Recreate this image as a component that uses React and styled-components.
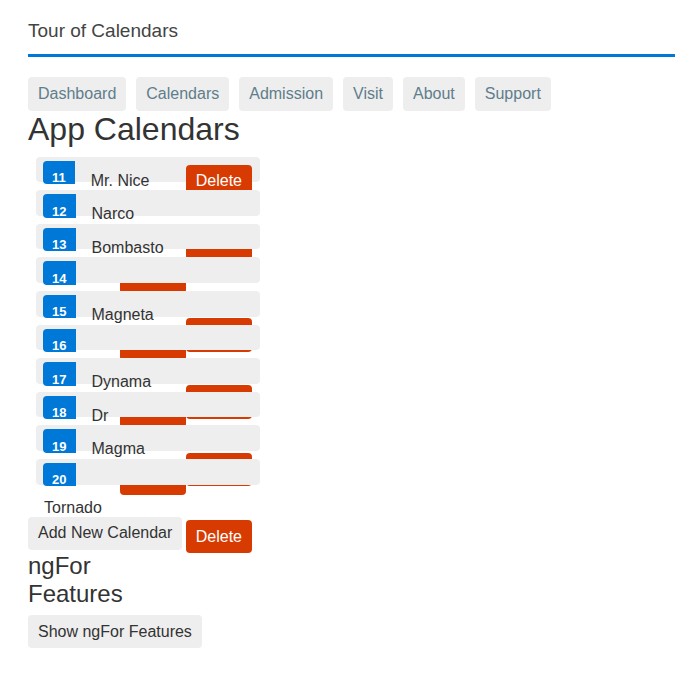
import React from 'react'
import styled, { createGlobalStyle } from 'styled-components'

const GlobalStyle = createGlobalStyle`
  body {
    margin: 0;
    background: #fff;
    color: #333;
    font-family: 'Liberation Sans', Arial, Helvetica, sans-serif;
  }
`

const Page = styled.div`
  padding-left: 28px;
`

const Header = styled.header`
  padding: 20px 0 11.5px;
  border-bottom: 3px solid #0078d7;
`

const Title = styled.h1`
  margin: 0;
  font-size: 19px;
  line-height: 22px;
  font-weight: normal;
  color: #444;
`

const Nav = styled.nav`
  display: flex;
  gap: 10px;
  margin-top: 20.8px;
`

const NavLink = styled.a`
  display: block;
  padding: 7.7px 10px;
  font-size: 16px;
  line-height: 18px;
  color: #607d8b;
  background: #eee;
  border-radius: 4px;
  text-decoration: none;
`

const Heading = styled.h2`
  margin: 0;
  padding-bottom: 2px;
  font-size: 32px;
  line-height: 36px;
  font-weight: normal;
`

// old float layout: the delete buttons float right and spill into the
// following rows; each row is its own stacking layer and paints over them
const List = styled.ul`
  list-style: none;
  margin: 0 0 32px;
  padding: 0;
  width: 240px;
`

const Item = styled.li`
  position: relative;
  z-index: 0;
  box-sizing: border-box;
  height: 25.6px;
  margin: 8px;
  padding: 8px 8px 0;
  background: #eee;
  border-radius: 4px;
  font-size: 16px;
  line-height: 24.2px;
  cursor: pointer;
`

const Badge = styled.span`
  display: inline-block;
  position: relative;
  left: -1px;
  top: -4px;
  box-sizing: border-box;
  height: 23.4px;
  padding: 10.4px 9.1px 0;
  margin-right: 10.4px;
  font-size: 13px;
  font-weight: bold;
  line-height: 13px;
  color: #fff;
  background: #0078d7;
  border-radius: 4px 0 0 4px;
`

const Name = styled.span`
  color: #333;
  overflow-wrap: anywhere;
`

const Button = styled.button`
  padding: 7.7px 10px;
  border: none;
  border-radius: 4px;
  background: ${p => (p.$danger ? '#d83b01' : '#eee')};
  color: ${p => (p.$danger ? '#fff' : '#333')};
  font: 16px/18px 'Liberation Sans', Arial, sans-serif;
  cursor: pointer;
`

const DeleteButton = styled(Button)`
  float: right;
  margin: 0 0 2px;
`

const Actions = styled.div``

const SubHeading = styled.h3`
  margin: 0;
  padding-top: 2px;
  font-size: 24px;
  line-height: 28px;
  font-weight: normal;
`

const Features = styled.div`
  margin-top: 7px;
`

const calendars = [
  { id: 11, name: 'Mr. Nice' },
  { id: 12, name: 'Narco' },
  { id: 13, name: 'Bombasto' },
  { id: 14, name: 'Celeritas' },
  { id: 15, name: 'Magneta' },
  { id: 16, name: 'RubberMan' },
  { id: 17, name: 'Dynama' },
  { id: 18, name: 'Dr IQ' },
  { id: 19, name: 'Magma' },
  { id: 20, name: 'Tornado' },
]

const links = ['Dashboard', 'Calendars', 'Admission', 'Visit', 'About', 'Support']

function App() {
  return (
    <Page>
      <GlobalStyle />
      <Header>
        <Title>Tour of Calendars</Title>
      </Header>
      <Nav>
        {links.map(l => (
          <NavLink key={l}>{l}</NavLink>
        ))}
      </Nav>
      <Heading>App Calendars</Heading>
      <List>
        {calendars.map(c => (
          <Item key={c.id}>
            <Badge>{c.id}</Badge>{' '}<Name>{c.name}</Name><DeleteButton $danger>Delete</DeleteButton>
          </Item>
        ))}
      </List>
      <Actions>
        <Button>Add New Calendar</Button>
      </Actions>
      <SubHeading>ngFor Features</SubHeading>
      <Features>
        <Button>Show ngFor Features</Button>
      </Features>
    </Page>
  )
}

export default App
